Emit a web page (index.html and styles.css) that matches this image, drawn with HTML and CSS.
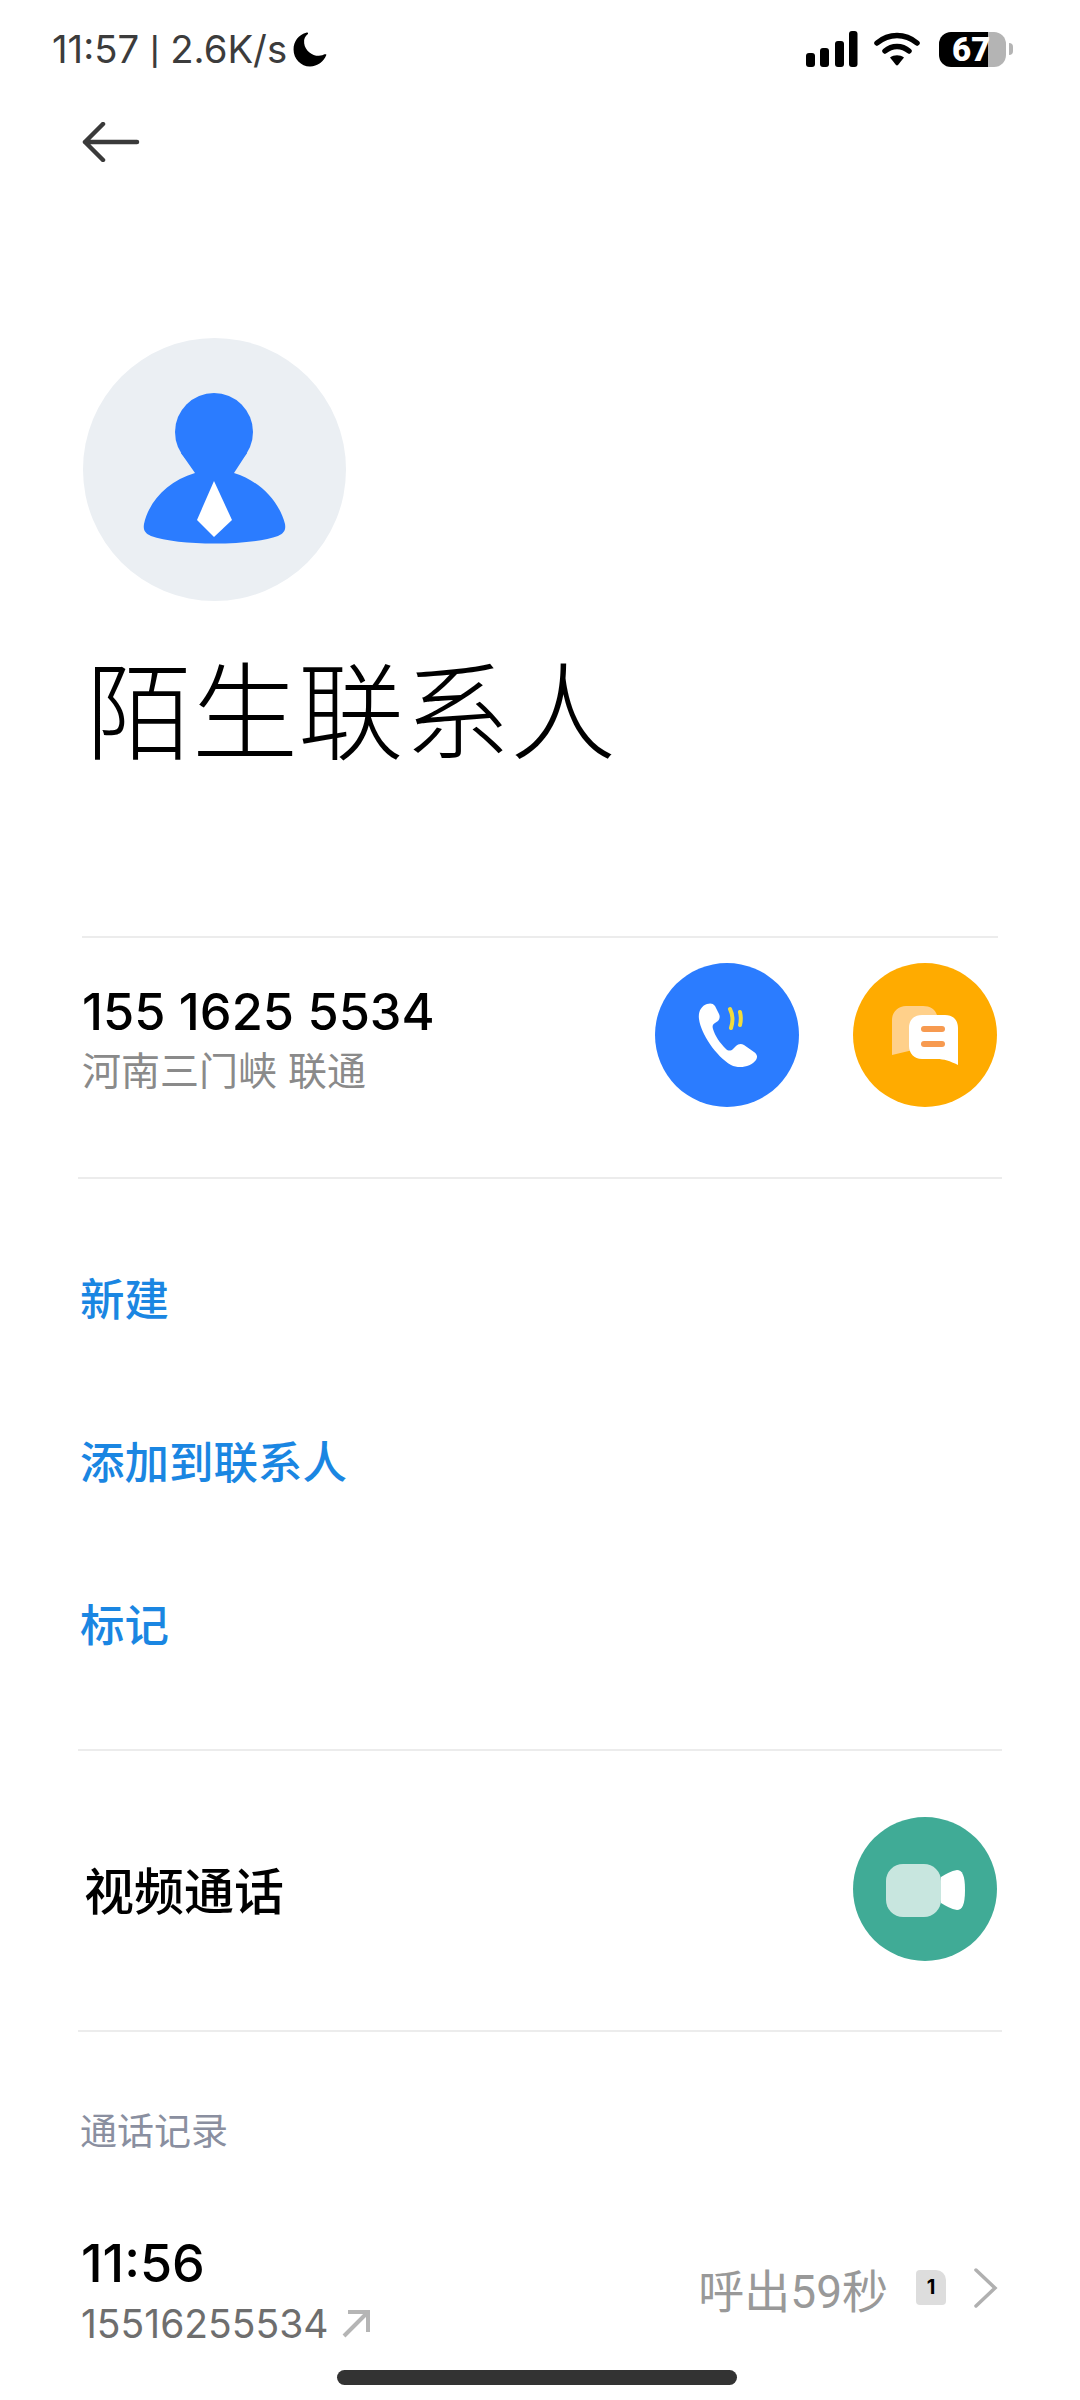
FILE: index.html
```html
<!DOCTYPE html>
<html lang="zh-CN">
<head>
    <meta charset="UTF-8">
    <meta name="viewport" content="width=device-width, initial-scale=1.0">
    <title>陌生联系人</title>
    <link rel="stylesheet" href="styles.css">
</head>
<body>
    <div class="status-bar">
        <div class="status-left">
            <span class="status-text">11:57 <span class="status-sep">|</span> 2.6K/s</span>
            <svg class="moon" width="34" height="35" viewBox="0 0 32 33">
                <path d="M13 0.5C5 2.500 0.500 9 0.500 16.500C0.500 25.500 7.500 32.500 16 32.500C23 32.500 29 28 31.500 21.500C30.500 20.500 29 21.500 27.500 22C20 24 11.500 18.500 10.500 10.500C10 6.500 11.500 4 14 2C14.500 1 14 0.500 13 0.500Z" fill="#000"/>
            </svg>
        </div>
        <div class="status-right">
            <svg width="52" height="36" viewBox="0 0 52 36">
                <rect x="0" y="22" width="9" height="14" rx="3" fill="#000"/>
                <rect x="14" y="17" width="9" height="19" rx="3" fill="#000"/>
                <rect x="29" y="10" width="9" height="26" rx="3" fill="#000"/>
                <rect x="43" y="0" width="8.500" height="36" rx="3" fill="#000"/>
            </svg>
            <svg class="wifi" width="46" height="34" viewBox="0 0 46 34">
                <path d="M3 11C15 1 31 1 43 11" fill="none" stroke="#000" stroke-width="5.500" stroke-linecap="round"/>
                <path d="M11 19C18 13 28 13 35 19" fill="none" stroke="#000" stroke-width="5.500" stroke-linecap="round"/>
                <path d="M16 25.500C20 22.500 26 22.500 30 25.500L24 33C23.500 33.500 22.500 33.500 22 33Z" fill="#000"/>
            </svg>
            <div class="battery"><span class="battery-num">67</span></div>
            <div class="battery-nub"></div>
        </div>
    </div>

    <div class="top-bar">
        <svg width="58" height="40" viewBox="0 0 58 40">
            <path d="M21 2L3 20L21 38M3 20H55" fill="none" stroke="#3a3a3a" stroke-width="4.500" stroke-linecap="round" stroke-linejoin="round"/>
        </svg>
    </div>

    <div class="avatar">
        <svg width="263" height="263" viewBox="0 0 263 263">
            <circle cx="131" cy="94" r="39" fill="#2b7cff"/>
            <path d="M98 115L112 135C85 143 66 163 61 186C60 192 62 195 68 198C95 208 168 208 195 198C201 195 203 192 202 186C196 163 177 143 151 135L164 115Z" fill="#2b7cff"/>
            <path d="M131 143L114 182L131 199L149 182Z" fill="#fff"/>
        </svg>
    </div>
    <h1 class="name">陌生联系人</h1>

    <div class="phone-row">
        <div class="phone-info">
            <p class="phone-num">155 1625 5534</p>
            <p class="phone-loc">河南三门峡 联通</p>
        </div>
        <div class="round-btns">
            <div class="round-btn call">
                <svg width="144" height="144" viewBox="0 0 144 144">
                    <path d="M52 41C46 43 43 49 44 56C46 71 61 93 76 102C84 106 96 104 101 97C103 94 102 91 99 89L89 82C86 80 83 81 81 83L78 86C76 88 73 88 71 86C65 80 60 73 58 66C57 63 58 61 60 60L63 58C65 56 65 53 64 51L60 43C58 40 55 40 52 41Z" fill="#fff"/>
                    <path d="M75 46C78 52 78 59 76 65" fill="none" stroke="#f2dc3c" stroke-width="4" stroke-linecap="round"/>
                    <path d="M85 49C86 53 86 58 85 62" fill="none" stroke="#f2dc3c" stroke-width="4" stroke-linecap="round"/>
                </svg>
            </div>
            <div class="round-btn sms">
                <svg width="144" height="144" viewBox="0 0 144 144">
                    <path d="M53 43H70C77 43 82 46 84 52L60 80V87L39 92V57C39 49 45 43 53 43Z" fill="#ffd08a"/>
                    <path d="M69 52H92C100 52 105 57 105 65V102C97 98 91 96 84 96H69C61 96 56 90 56 83V65C56 57 61 52 69 52Z" fill="#fff"/>
                    <rect x="68" y="63" width="24" height="6" rx="3" fill="#f79a50"/>
                    <rect x="68" y="78" width="24" height="6" rx="3" fill="#f79a50"/>
                </svg>
            </div>
        </div>
    </div>

    <div class="actions">
        <a class="action">新建</a>
        <a class="action">添加到联系人</a>
        <a class="action">标记</a>
    </div>

    <div class="video-row">
        <span class="video-label">视频通话</span>
        <div class="round-btn video">
            <svg width="144" height="144" viewBox="0 0 144 144">
                <rect x="33" y="47" width="55" height="53" rx="17" fill="#c8e6df"/>
                <path d="M88 60C93 57 98 54 104 53C109 53 112 58 112 73C112 88 109 93 104 93C98 92 93 89 88 86Z" fill="#fff"/>
            </svg>
        </div>
    </div>

    <div class="history">
        <p class="history-title">通话记录</p>
        <div class="history-row">
            <div class="history-left">
                <p class="history-time">11:56</p>
                <p class="history-num">15516255534
                    <svg width="30" height="30" viewBox="0 0 30 30">
                        <path d="M3 27L27 3M7 3H27V23" fill="none" stroke="#b5b5b5" stroke-width="4"/>
                    </svg>
                </p>
            </div>
            <div class="history-right">
                <span class="history-dur">呼出59秒</span>
                <span class="sim">1</span>
                <svg width="24" height="40" viewBox="0 0 24 40">
                    <path d="M2 2L21 20L2 38" fill="none" stroke="#b0b0b0" stroke-width="3.500" stroke-linecap="round"/>
                </svg>
            </div>
        </div>
    </div>

    <div class="home-bar"></div>
</body>
</html>
```

FILE: styles.css
```css
*{
    margin: 0;
    padding: 0;
    box-sizing: border-box;
}
body{
    width: 1080px;
    height: 2400px;
    overflow: hidden;
    position: relative;
    background-color: #fff;
    color: #000;
    font-family: Inter, "Noto Sans CJK SC", sans-serif;
}
.status-bar{
    display: flex;
    justify-content: space-between;
    align-items: center;
    height: 98px;
    padding: 0 67px 0 52px;
}
.status-left{
    display: flex;
    align-items: center;
    gap: 6px;
}
.status-text{
    font-size: 38.300px;
    color: #3c3c3c;
}
.status-sep{
    font-family: Roboto, sans-serif;
    font-weight: 500;
}
.status-right{
    display: flex;
    align-items: center;
}
.wifi{
    margin-left: 16px;
}
.battery{
    width: 67px;
    height: 35px;
    margin-left: 19px;
    border-radius: 12px;
    background: linear-gradient(to right, #000 49px, #b4b4b4 49px);
    display: flex;
    align-items: center;
    padding-left: 13px;
}
.battery-num{
    font-family: Roboto, sans-serif;
    font-size: 33px;
    font-weight: 900;
    color: #fff;
    line-height: 35px;
}
.battery-nub{
    width: 4px;
    height: 12px;
    margin-left: 3px;
    border-radius: 0 4px 4px 0;
    background-color: #b4b4b4;
}
.top-bar{
    display: flex;
    align-items: center;
    height: 88px;
    padding-left: 82px;
}
.avatar{
    width: 263px;
    height: 263px;
    margin: 152px 0 0 83px;
    border-radius: 50%;
    background-color: #ebeff3;
}
.name{
    height: 140px;
    margin: 42px 0 0 86px;
    font-size: 106px;
    font-weight: 300;
    line-height: 140px;
    letter-spacing: 0;
}
.phone-row{
    display: flex;
    justify-content: space-between;
    height: 241px;
    margin: 153px 82px 0;
    border-top: 2px solid #ececec;
    padding-top: 25px;
}
.phone-num{
    margin-top: 19px;
    font-size: 50.500px;
    font-weight: 500;
    line-height: 60px;
}
.phone-loc{
    margin-top: 4px;
    font-size: 39px;
    line-height: 50px;
    color: #8a8a8a;
}
.round-btns{
    display: flex;
    gap: 54px;
    margin-right: 1px;
}
.round-btn{
    width: 144px;
    height: 144px;
    border-radius: 50%;
}
.call{
    background-color: #2b7cff;
}
.sms{
    background-color: #ffab00;
}
.video{
    background-color: #40ab96;
}
.actions{
    display: flex;
    flex-direction: column;
    margin: 0 78px;
    padding: 40px 2px 41px;
    border-top: 2px solid #ececec;
}
.action{
    height: 163px;
    line-height: 163px;
    font-size: 44.500px;
    font-weight: 500;
    color: #1a86e2;
}
.video-row{
    display: flex;
    justify-content: space-between;
    align-items: center;
    height: 283px;
    margin: 0 78px;
    padding: 0 5px 3px 6px;
    border-top: 2px solid #ececec;
    border-bottom: 2px solid #ececec;
}
.video-label{
    margin-bottom: 3px;
    font-size: 50px;
    font-weight: 500;
}
.history{
    padding: 0 82px 0 80px;
}
.history-title{
    margin-top: 75px;
    font-size: 37px;
    line-height: 50px;
    color: #8a8fa0;
}
.history-row{
    display: flex;
    justify-content: space-between;
    align-items: center;
    margin-top: 75px;
}
.history-left{
    padding-left: 1px;
}
.history-time{
    font-size: 52px;
    font-weight: 500;
    line-height: 64px;
}
.history-num{
    display: flex;
    align-items: center;
    gap: 12px;
    margin-top: 3px;
    font-size: 39px;
    line-height: 50px;
    color: #6e6e6e;
}
.history-right{
    display: flex;
    align-items: center;
    padding-bottom: 6px;
}
.history-dur{
    font-family: Roboto, "Noto Sans CJK SC", sans-serif;
    font-size: 46px;
    color: #999;
}
.sim{
    width: 30px;
    height: 35px;
    margin: 0 28px;
    background-color: #ddd;
    border-radius: 4px 10px 4px 4px;
    font-size: 20px;
    font-weight: 700;
    line-height: 35px;
    text-align: center;
}
.home-bar{
    position: absolute;
    left: 337px;
    bottom: 15px;
    width: 400px;
    height: 15px;
    border-radius: 8px;
    background-color: #333;
}
```
